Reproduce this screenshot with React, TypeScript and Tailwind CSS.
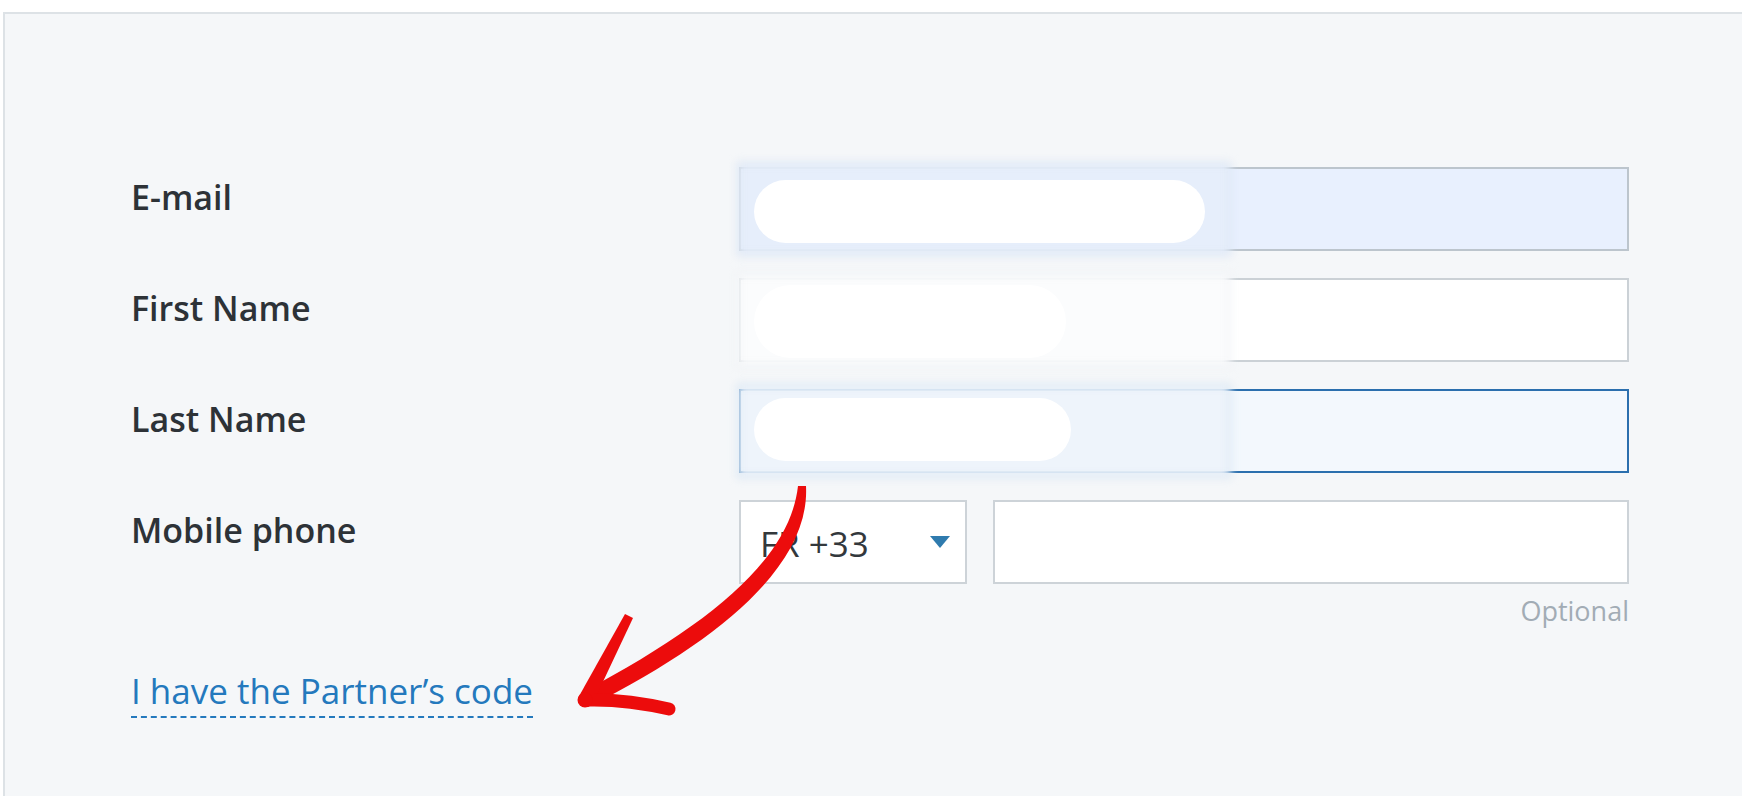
import React from 'react';

const labelCls = 'w-[608px] shrink-0 pt-[5px] text-[34px] leading-[50px] font-semibold text-[#2d3237]';

function Blurred({ tint, edge, pill }: { tint: string; edge: string; pill: string }) {
  // redaction smudge laid over the left part of a field
  return (
    <>
      <div className={`absolute -left-[4px] -top-[7px] -bottom-[7px] w-[494px] border-[3px] blur-[4px] ${tint} ${edge}`} />
      <div className={`absolute left-[13px] rounded-full bg-white blur-[0.5px] ${pill}`} />
    </>
  );
}

export default function App() {
  return (
    <div className="relative h-[796px] w-[1742px] overflow-hidden bg-white pl-[3px] pt-[12px] font-['Open_Sans',sans-serif]">
      <div className="h-[800px] w-[1780px] border-l-2 border-t-2 border-[#dde2e6] bg-[#f5f7f9] pl-[126px] pt-[153px]">
        <div className="flex flex-col gap-[27px]">
          <div className="flex">
            <div className={labelCls}>E-mail</div>
            <div className="relative h-[84px] w-[890px] border-2 border-[#bcc5cd] bg-[#e8f0fe]">
              <Blurred tint="bg-[#e6eefb]" edge="border-[#d9e3f2]" pill="top-[11px] h-[63px] w-[451px]" />
            </div>
          </div>

          <div className="flex">
            <div className={labelCls}>First Name</div>
            <div className="relative h-[84px] w-[890px] border-2 border-[#cbd1d6] bg-white">
              <Blurred tint="bg-[#fbfcfd]" edge="border-[#eef1f4]" pill="top-[5px] h-[73px] w-[312px]" />
            </div>
          </div>

          <div className="flex">
            <div className={labelCls}>Last Name</div>
            <div className="relative h-[84px] w-[890px] border-2 border-[#2b6fae] bg-[#f3f8fd]">
              <Blurred tint="bg-[#eef4fb]" edge="border-[#d3e2f1]" pill="top-[7px] h-[63px] w-[317px]" />
            </div>
          </div>

          <div className="flex">
            <div className={labelCls}>Mobile phone</div>
            <div className="flex w-[890px] flex-col">
              <div className="flex gap-[26px]">
                <div className="flex h-[84px] w-[228px] items-center justify-between border-2 border-[#cdd3d8] bg-white pl-[19px] pr-[15px]">
                  <span className="pt-[3px] text-[35px] leading-[50px] text-[#33383c]">FR +33</span>
                  <svg width="20" height="12" viewBox="0 0 20 12">
                    <polygon points="0,0 20,0 10,12" fill="#2f7bae" />
                  </svg>
                </div>
                <input
                  readOnly
                  className="h-[84px] flex-1 border-2 border-[#cdd3d8] bg-white outline-none"
                />
              </div>
              <div className="mt-[8px] text-right text-[27px] leading-[38px] text-[#a2acb5]">Optional</div>
            </div>
          </div>
        </div>

        <a className="mt-[35px] inline-block border-b-2 border-dashed border-[#2479bd] text-[35px] leading-[51px] text-[#2479bd]">
          I have the Partner’s code
        </a>
      </div>

      {/* hand drawn red arrow on top */}
      <svg className="pointer-events-none absolute left-0 top-0" width="1742" height="796" viewBox="0 0 1742 796">
        <path
          d="M798,486 L806,486 C810,562 727,637 588,707 L581,693 C713,623 790,558 798,486 Z"
          fill="#ec0c0c"
        />
        <path d="M625,614 L633,618 L592,705 L578,698 Z" fill="#ec0c0c" />
        <path d="M587,700 Q626,699 669,709" stroke="#ec0c0c" strokeWidth="13" strokeLinecap="round" fill="none" />
        <circle cx="585" cy="700" r="7.5" fill="#ec0c0c" />
      </svg>
    </div>
  );
}
